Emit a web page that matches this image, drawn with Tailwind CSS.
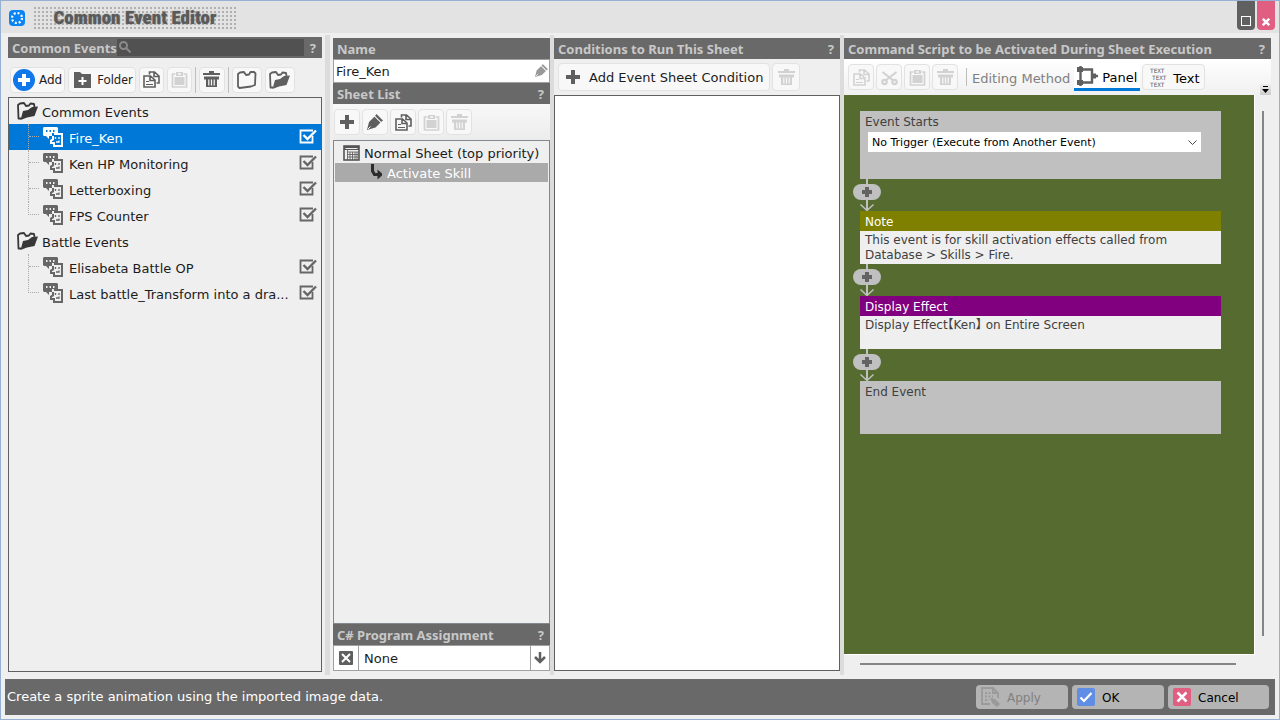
<!DOCTYPE html>
<html lang="en">
<head>
    <meta charset="UTF-8">
    <meta name="viewport" content="width=device-width, initial-scale=1.0">
    <title>Common Event Editor</title>
    <!-- Tailwind CSS via CDN -->
    <script src="https://cdn.jsdelivr.net/npm/@tailwindcss/browser@4"></script>
</head>
<body class="h-screen flex flex-col overflow-hidden border border-[#94b0d2] bg-[#efefef] font-['DejaVu_Sans','Noto_Sans_CJK_JP',sans-serif] text-[13px] leading-5 text-[#1c1c1c]">

<!-- Icon set -->
<svg class="hidden">
    <symbol id="i-plus" viewBox="0 0 14 14"><path fill="currentColor" d="M5 0h4v5h5v4H9v5H5V9H0V5h5z"/></symbol>
    <symbol id="i-copy" viewBox="0 0 17 17">
        <path fill="none" stroke="currentColor" stroke-width="1.600" d="M6.500 3.500V1h5L16 5v7h-2.500M11 1v4.500h4.500"/>
        <path fill="none" stroke="currentColor" stroke-width="1.600" d="M1 5h6.500L12 9v7H1zM7 5v4.500h4.500"/>
        <path stroke="currentColor" d="M3 10.500h3M3 13.500h7"/>
    </symbol>
    <symbol id="i-paste" viewBox="0 0 17 17">
        <path fill="none" stroke="currentColor" stroke-width="1.700" d="M4.500 3H1.500V16h14V3H12.500"/>
        <path fill="currentColor" fill-rule="evenodd" d="M5 1h7v4H5zM7 2.200v1.600h3V2.200zM3.500 6h10v8h-10z"/>
    </symbol>
    <symbol id="i-trash" viewBox="0 0 17 17">
        <path fill="currentColor" d="M6 0h5v2h6v2H0V2h6zM1 5.500h15v3h-2V16H3V8.500H1z"/>
        <path stroke="#f8f8f8" stroke-width="1.200" d="M5.800 8.500v6M8.500 8.500v6M11.200 8.500v6"/>
    </symbol>
    <symbol id="i-cut" viewBox="0 0 17 17">
        <g fill="none" stroke="currentColor" stroke-width="2.200"><path d="M1.500 3l11 8.500M15.500 3L4.500 11.500"/><circle cx="3.500" cy="13" r="2.200"/><circle cx="13.500" cy="13" r="2.200"/></g>
    </symbol>
    <symbol id="i-pen" viewBox="0 0 16 16">
        <path fill="currentColor" d="M9.500 0L16 6.500 14 8 8 2zM7.500 2.500L13.500 8.500 8.500 13.500 0 16 2 8z"/>
        <path stroke="#f8f8f8" d="M1 15l2.500-2.500M7.500 2l6.500 6.500"/>
    </symbol>
    <symbol id="i-folder" viewBox="0 0 20 18"><path fill="none" stroke="currentColor" stroke-width="1.800" stroke-linejoin="round" d="M2.500 17L1 15.500V3l2-1.500 4-.500 2 3 3-.500 1.500-2.500h3.500l1.500 1.500-.500 11.500-4 1.500z"/></symbol>
    <symbol id="i-open" viewBox="0 0 21 18">
        <path fill="none" stroke="currentColor" stroke-width="1.800" stroke-linejoin="round" d="M4 16.500H1.500L1 3l2-1.500L7 1l2 3 3-.500L13.500 1.500 17 2l.500 3"/>
        <path fill="currentColor" d="M6 9l5-1 4-3 6-.500L17.500 14 10 15.500 3.500 18z"/>
    </symbol>
    <symbol id="i-event" viewBox="0 0 20 20">
        <path fill="currentColor" fill-rule="evenodd" d="M1 0h13l1 1v5H9v3H6v3L3 9H1L0 8V1zM3 3v2h1.500V3zM6.500 3v2H8V3zM10 3v2h1.500V3z"/>
        <path fill="none" stroke="currentColor" stroke-width="2" d="M11 7h8v12h-8v-3H8v-2.500l2-1V9"/>
        <path fill="none" stroke="currentColor" stroke-width="1.300" d="M12.500 10v2M16 10v2M13 15h3v-1.500"/>
    </symbol>
    <symbol id="i-check" viewBox="0 0 18 16">
        <path fill="none" stroke="currentColor" stroke-width="1.800" d="M14 1.500H1.500v12h12V7"/>
        <path fill="none" stroke="currentColor" stroke-width="2.400" d="M4.500 6l4 4L17 1.500"/>
    </symbol>
    <symbol id="i-link" viewBox="0 0 28 32">
        <path stroke="#c0c0c0" stroke-width="2" d="M14 0v31"/>
        <path fill="none" stroke="#c0c0c0" stroke-width="1.500" d="M7.500 25.500l6.500 6 6.500-6"/>
        <rect y="5" width="28" height="16" rx="8" fill="#c0c0c0"/>
        <path fill="#636363" d="M12 8h4v3h3v4h-3v3h-4v-3H9v-4h3z"/>
    </symbol>
</svg>

<!-- Title bar -->
<header class="flex h-8 shrink-0 items-start justify-between bg-[#e3e3e3] pr-1 pl-2">
    <div class="flex items-center gap-2 pt-[5px]">
        <svg class="size-4" viewBox="0 0 16 16"><rect width="16" height="16" rx="4" fill="#0a84f4"/><circle cx="8" cy="8" r="5" fill="none" stroke="#fff" stroke-width="2.200" stroke-dasharray="2 1.920"/></svg>
        <h1 class="flex h-[23px] w-[204px] items-center justify-center bg-[radial-gradient(#b0b0b0_1px,transparent_1px)] bg-size-[4px_4px] font-['Roboto_Condensed',Roboto,sans-serif] text-[19px] font-black whitespace-nowrap text-[#5a5a5a] [text-shadow:0_0_2px_#999]">Common Event Editor</h1>
    </div>
    <div class="flex gap-0.5">
        <button aria-label="Maximize" class="flex h-[29px] w-[18px] items-end justify-center rounded-b bg-[#606060] pb-1"><span class="size-2.5 border border-white"></span></button>
        <button aria-label="Close" class="flex h-[29px] w-[18px] items-end justify-center rounded-b bg-[#e05e82] pb-1"><svg class="size-2 text-white" viewBox="0 0 10 10"><path stroke="currentColor" stroke-width="3" d="M1 1l8 8M9 1L1 9"/></svg></button>
    </div>
</header>

<main class="flex min-h-0 flex-1 pr-2 pl-[7px]">
    <!-- Event tree -->
    <section class="flex w-[314px] shrink-0 flex-col pt-1 pb-[7px]">
        <div class="flex h-[21px] items-center bg-[#696969] pr-1.5 pl-1 font-['Noto_Sans',sans-serif] font-bold text-[#c8c8c8]">
            <h2 class="whitespace-nowrap"><label for="search">Common Events</label></h2>
            <div class="relative flex-1">
                <input id="search" type="text" class="block h-[17px] w-full bg-[#515151] pl-5 text-xs outline-none">
                <svg class="absolute top-0.5 left-0.5 size-3 text-[#8a8a8a]" viewBox="0 0 12 12"><g fill="none" stroke="currentColor" stroke-width="2"><circle cx="4.500" cy="4.500" r="3.500"/><path d="M7 7l4.500 4.500"/></g></svg>
            </div>
            <button class="ml-1.5">?</button>
        </div>
        <div class="flex h-[39px] items-center gap-[3px] px-0.5 pt-1">
            <button class="flex h-[26px] items-center gap-1 rounded border border-[#e2e2e2] bg-[#f8f8f8] px-0.5 text-xs"><svg class="size-[22px]" viewBox="0 0 22 22"><circle cx="11" cy="11" r="11" fill="#1078e8"/><path fill="#fff" d="M9 5h4v4h4v4h-4v4H9v-4H5V9h4z"/></svg>Add</button>
            <button class="flex h-[26px] items-center gap-1.5 rounded border border-[#e2e2e2] bg-[#f8f8f8] px-0.5 pl-[5px] font-['Noto_Sans',sans-serif] text-xs"><svg class="h-4 w-[17px] text-[#5f5f5f]" viewBox="0 0 17 16"><path fill="currentColor" d="M0 0h6l2 2h9v14H0z"/><path stroke="#fff" stroke-width="2" d="M8.500 5v8M4.500 9h8"/></svg>Folder</button>
            <button aria-label="Copy" class="flex h-[26px] w-[25px] items-center justify-center rounded border border-[#e2e2e2] bg-[#f8f8f8] text-[#5f5f5f]"><svg class="size-[17px]"><use href="#i-copy"/></svg></button>
            <button aria-label="Paste" disabled class="flex h-[26px] w-[25px] items-center justify-center rounded border border-[#e2e2e2] bg-[#f8f8f8] text-[#d2d2d2]"><svg class="size-[17px]"><use href="#i-paste"/></svg></button>
            <span class="h-[26px] w-px bg-[#bdbdbd]"></span>
            <button aria-label="Delete" class="flex size-[26px] items-center justify-center rounded border border-[#e2e2e2] bg-[#f8f8f8] text-[#5f5f5f]"><svg class="size-[17px]"><use href="#i-trash"/></svg></button>
            <span class="h-[26px] w-px bg-[#bdbdbd]"></span>
            <button aria-label="Close folders" class="flex h-[26px] w-[30px] items-center justify-center rounded border border-[#e2e2e2] bg-[#f8f8f8] text-[#5f5f5f]"><svg class="h-[18px] w-5"><use href="#i-folder"/></svg></button>
            <button aria-label="Open folders" class="flex h-[26px] w-[30px] items-center justify-center rounded border border-[#e2e2e2] bg-[#f8f8f8] text-[#5f5f5f]"><svg class="h-[18px] w-[21px]"><use href="#i-open"/></svg></button>
        </div>
        <ul class="flex-1 border border-[#606060]">
            <li>
                <div class="flex h-[26px] items-center gap-1 pl-2"><svg class="h-[18px] w-[21px] text-[#383838]"><use href="#i-open"/></svg><span class="pt-[3px]">Common Events</span></div>
                <ul>
                    <li class="flex h-[26px] items-center bg-[#0078d7] pr-1 pl-[19px] text-white"><span class="h-full w-[11px] border-l border-dotted border-[#aaa]"><span class="block h-1/2 border-b border-dotted border-[#aaa]"></span></span><svg class="ml-1 size-5"><use href="#i-event"/></svg><span class="flex-1 pt-[3px] pl-1.5">Fire_Ken</span><svg class="h-4 w-[18px]"><use href="#i-check"/></svg></li>
                    <li class="flex h-[26px] items-center pr-1 pl-[19px]"><span class="h-full w-[11px] border-l border-dotted border-[#aaa]"><span class="block h-1/2 border-b border-dotted border-[#aaa]"></span></span><svg class="ml-1 size-5 text-[#666]"><use href="#i-event"/></svg><span class="flex-1 pt-[3px] pl-1.5">Ken HP Monitoring</span><svg class="h-4 w-[18px] text-[#666]"><use href="#i-check"/></svg></li>
                    <li class="flex h-[26px] items-center pr-1 pl-[19px]"><span class="h-full w-[11px] border-l border-dotted border-[#aaa]"><span class="block h-1/2 border-b border-dotted border-[#aaa]"></span></span><svg class="ml-1 size-5 text-[#666]"><use href="#i-event"/></svg><span class="flex-1 pt-[3px] pl-1.5">Letterboxing</span><svg class="h-4 w-[18px] text-[#666]"><use href="#i-check"/></svg></li>
                    <li class="flex h-[26px] items-center pr-1 pl-[19px]"><span class="h-full w-[11px]"><span class="block h-1/2 border-b border-l border-dotted border-[#aaa]"></span></span><svg class="ml-1 size-5 text-[#666]"><use href="#i-event"/></svg><span class="flex-1 pt-[3px] pl-1.5">FPS Counter</span><svg class="h-4 w-[18px] text-[#666]"><use href="#i-check"/></svg></li>
                </ul>
            </li>
            <li>
                <div class="flex h-[26px] items-center gap-1 pl-2"><svg class="h-[18px] w-[21px] text-[#383838]"><use href="#i-open"/></svg><span class="pt-[3px]">Battle Events</span></div>
                <ul>
                    <li class="flex h-[26px] items-center pr-1 pl-[19px]"><span class="h-full w-[11px] border-l border-dotted border-[#aaa]"><span class="block h-1/2 border-b border-dotted border-[#aaa]"></span></span><svg class="ml-1 size-5 text-[#666]"><use href="#i-event"/></svg><span class="flex-1 pt-[3px] pl-1.5">Elisabeta Battle OP</span><svg class="h-4 w-[18px] text-[#666]"><use href="#i-check"/></svg></li>
                    <li class="flex h-[26px] items-center pr-1 pl-[19px]"><span class="h-full w-[11px]"><span class="block h-1/2 border-b border-l border-dotted border-[#aaa]"></span></span><svg class="ml-1 size-5 text-[#666]"><use href="#i-event"/></svg><span class="flex-1 pt-[3px] pl-1.5 whitespace-nowrap">Last battle_Transform into a dra...</span><svg class="h-4 w-[18px] text-[#666]"><use href="#i-check"/></svg></li>
                </ul>
            </li>
        </ul>
    </section>
    <div class="mx-[3px] mt-0.5 mb-1 w-[5px] shrink-0 bg-[#dcdcdc]"></div>

    <!-- Sheets -->
    <section class="flex w-[217px] shrink-0 flex-col pt-[5px] pb-2">
        <h2 class="h-[21px] bg-[#696969] px-1 pt-px font-['Noto_Sans',sans-serif] font-bold text-[#c8c8c8]"><label for="name">Name</label></h2>
        <div class="relative">
            <input id="name" type="text" value="Fire_Ken" class="block h-6 w-full border border-[#a0a0a0] bg-white px-0.5 pt-px outline-none">
            <svg class="absolute top-[5px] right-0.5 size-[13px] text-[#999]"><use href="#i-pen"/></svg>
        </div>
        <div class="flex h-[21px] justify-between bg-[#696969] pt-px pr-1.5 pl-1 font-['Noto_Sans',sans-serif] font-bold text-[#c8c8c8]"><h2>Sheet List</h2><button>?</button></div>
        <div class="flex h-9 items-center gap-0.5 bg-linear-to-b from-[#f8f8f8] to-[#ececec] px-px">
            <button aria-label="Add" class="flex size-[26px] items-center justify-center rounded border border-[#e2e2e2] bg-[#f8f8f8] text-[#5f5f5f]"><svg class="size-3.5"><use href="#i-plus"/></svg></button>
            <button aria-label="Rename" class="flex size-[26px] items-center justify-center rounded border border-[#e2e2e2] bg-[#f8f8f8] text-[#5f5f5f]"><svg class="size-4"><use href="#i-pen"/></svg></button>
            <button aria-label="Copy" class="flex size-[26px] items-center justify-center rounded border border-[#e2e2e2] bg-[#f8f8f8] text-[#5f5f5f]"><svg class="size-[17px]"><use href="#i-copy"/></svg></button>
            <button aria-label="Paste" disabled class="flex size-[26px] items-center justify-center rounded border border-[#e2e2e2] bg-[#f8f8f8] text-[#d2d2d2]"><svg class="size-[17px]"><use href="#i-paste"/></svg></button>
            <button aria-label="Delete" disabled class="flex size-[26px] items-center justify-center rounded border border-[#e2e2e2] bg-[#f8f8f8] text-[#d2d2d2]"><svg class="size-[17px]"><use href="#i-trash"/></svg></button>
        </div>
        <ul class="flex-1 border border-[#828790] px-px pt-0.5">
            <li class="flex h-5 items-center gap-1 pl-2 whitespace-nowrap"><svg class="h-4 w-[17px] shrink-0 text-[#555]" viewBox="0 0 17 16"><rect x="1" y="1" width="15" height="14" fill="none" stroke="currentColor" stroke-width="1.600"/><path fill="currentColor" d="M1 1h15v4H1z"/><path stroke="#efefef" d="M2.500 3.500h12"/><path fill="none" stroke="currentColor" stroke-width=".8" d="M4.500 5v10M7 7v8M9.500 7v8M12 7v8M14 7v8M4.500 7h11M4.500 9.500h11M4.500 12h11"/></svg><span class="pt-0.5">Normal Sheet (top priority)</span></li>
            <li class="flex h-[19px] items-center gap-[5px] bg-[#aaa] pl-9 text-white"><svg class="h-[17px] w-[11px] text-[#2c2c2c]" viewBox="0 0 11 17"><path fill="none" stroke="currentColor" stroke-width="3" d="M1.500 0v7l2 3.500H8"/><path fill="currentColor" d="M6.500 5.500L12 10.500l-5.500 5z"/></svg><span class="pt-0.5">Activate Skill</span></li>
        </ul>
        <div class="flex h-[21px] justify-between bg-[#696969] pt-px pr-1.5 pl-1 font-['Noto_Sans',sans-serif] font-bold text-[#c8c8c8]"><h2><label for="program">C# Program Assignment</label></h2><button>?</button></div>
        <div class="flex h-[26px] border border-[#a0a0a0] bg-white">
            <button aria-label="Clear" class="flex w-[25px] items-center justify-center border-r border-[#a0a0a0]"><svg class="size-3.5" viewBox="0 0 14 14"><rect width="14" height="14" rx="1" fill="#5f5f5f"/><path stroke="#fff" stroke-width="2" d="M3 3l8 8M11 3l-8 8"/></svg></button>
            <input id="program" type="text" value="None" class="min-w-0 flex-1 px-[5px] pt-px outline-none">
            <button aria-label="Choose" class="flex w-[19px] items-center justify-center border-l border-[#a0a0a0] text-[#5f5f5f]"><svg class="size-3" viewBox="0 0 12 12"><path fill="none" stroke="currentColor" stroke-width="2.500" d="M6 0v10M1 5l5 5 5-5"/></svg></button>
        </div>
    </section>
    <div class="mt-0.5 mb-1 w-1 shrink-0 bg-[#dcdcdc]"></div>

    <!-- Conditions -->
    <section class="flex w-[286px] shrink-0 flex-col pt-[5px] pb-2">
        <div class="flex h-[21px] justify-between bg-[#696969] pt-px pr-1.5 pl-1 font-['Noto_Sans',sans-serif] font-bold text-[#c8c8c8]"><h2>Conditions to Run This Sheet</h2><button>?</button></div>
        <div class="flex h-9 items-center gap-0.5 px-1">
            <button class="flex h-7 items-center gap-[9px] rounded border border-[#e2e2e2] bg-[#f8f8f8] pr-1.5 pl-[7px] whitespace-nowrap"><svg class="size-3.5 text-[#5f5f5f]"><use href="#i-plus"/></svg><span class="pt-0.5">Add Event Sheet Condition</span></button>
            <button aria-label="Delete" disabled class="flex size-7 items-center justify-center rounded border border-[#e2e2e2] bg-[#f8f8f8] text-[#d2d2d2]"><svg class="size-[17px]"><use href="#i-trash"/></svg></button>
        </div>
        <div class="flex-1 border border-[#606060] bg-white"></div>
    </section>
    <div class="mt-0.5 mb-1 w-1 shrink-0 bg-[#dcdcdc]"></div>

    <!-- Command script -->
    <section class="flex min-w-0 flex-1 flex-col pt-[5px]">
        <div class="flex h-[21px] shrink-0 justify-between bg-[#696969] pt-px pr-1.5 pl-1 font-['Noto_Sans',sans-serif] font-bold text-[#c8c8c8]"><h2>Command Script to be Activated During Sheet Execution</h2><button>?</button></div>
        <div class="flex h-9 shrink-0 items-center gap-0.5 rounded-b bg-linear-to-b from-white to-[#f0f0f0] pl-1">
            <button aria-label="Copy" disabled class="flex size-[26px] items-center justify-center rounded border border-[#e2e2e2] bg-[#f8f8f8] text-[#d2d2d2]"><svg class="size-[17px]"><use href="#i-copy"/></svg></button>
            <button aria-label="Cut" disabled class="flex size-[26px] items-center justify-center rounded border border-[#e2e2e2] bg-[#f8f8f8] text-[#d2d2d2]"><svg class="size-[17px]"><use href="#i-cut"/></svg></button>
            <button aria-label="Paste" disabled class="flex size-[26px] items-center justify-center rounded border border-[#e2e2e2] bg-[#f8f8f8] text-[#d2d2d2]"><svg class="size-[17px]"><use href="#i-paste"/></svg></button>
            <button aria-label="Delete" disabled class="flex size-[26px] items-center justify-center rounded border border-[#e2e2e2] bg-[#f8f8f8] text-[#d2d2d2]"><svg class="size-[17px]"><use href="#i-trash"/></svg></button>
            <span class="mr-[3px] ml-1.5 h-[18px] w-px bg-[#bdbdbd]"></span>
            <span class="pt-[3px] whitespace-nowrap text-[#808080]">Editing Method</span>
            <button class="ml-0.5 flex h-7 items-center gap-1 border-b-[3px] border-[#0078d7] bg-white px-[3px] text-black"><svg class="h-5 w-[21px] text-[#5f5f5f]" viewBox="0 0 21 20"><path fill="none" stroke="currentColor" stroke-width="2.400" d="M3.500 0v20M2 3.500h13v13H2M15 10h6"/><path fill="currentColor" d="M0 1h6v5H0zM0 14h6v5H0zM16 7.500h3v5h-3z"/></svg><span class="pt-1">Panel</span></button>
            <button class="flex h-[26px] items-center gap-1.5 rounded border border-[#e2e2e2] bg-[#f8f8f8] px-1 text-black"><span aria-hidden="true" class="flex w-5 flex-col font-['DejaVu_Sans_Mono',monospace] text-[6px] leading-[7px] text-[#555]"><span>TEXT</span><span class="pl-1">TEXT</span><span>TEXT</span></span><span class="pt-[3px]">Text</span></button>
            <button aria-label="More tools" class="mt-auto ml-auto flex h-[11px] w-[11px] items-center justify-center bg-linear-to-b from-[#eee] to-[#ccc] text-black"><svg class="h-[7px] w-[7px]" viewBox="0 0 7 7"><path fill="currentColor" d="M1 0h5v1H1zM0 3h7L3.500 7z"/></svg></button>
        </div>
        <div class="flex min-h-0 flex-1">
            <div class="min-w-0 flex-1 overflow-hidden border-r border-b border-white bg-[#556b2f] px-4 pt-4 text-xs leading-[15px] text-[#404040]">
                <div class="h-[68px] max-w-[361px] bg-[#c0c0c0] px-2 pt-1">
                    <label for="trigger" class="-ml-[3px] block h-[17px]">Event Starts</label>
                    <div class="relative mr-3">
                        <select id="trigger" class="block h-5 w-full appearance-none bg-white px-1 pt-px text-[11px] text-black outline-none"><option>No Trigger (Execute from Another Event)</option></select>
                        <svg class="absolute top-2 right-1 h-[5px] w-[9px]" viewBox="0 0 9 5"><path fill="none" stroke="#444" d="M.5.500l4 4 4-4"/></svg>
                    </div>
                </div>
                <button aria-label="Insert command" class="-ml-[7px] block"><svg class="block h-8 w-7"><use href="#i-link"/></svg></button>
                <div class="max-w-[361px]">
                    <h3 class="h-5 bg-[#808000] px-[5px] pt-1 text-white">Note</h3>
                    <p class="h-[33px] bg-[#efefef] px-[5px] pt-0.5">This event is for skill activation effects called from<br>Database &gt; Skills &gt; Fire.</p>
                </div>
                <button aria-label="Insert command" class="-ml-[7px] block"><svg class="block h-8 w-7"><use href="#i-link"/></svg></button>
                <div class="max-w-[361px]">
                    <h3 class="h-5 bg-[#800080] px-[5px] pt-1 text-white">Display Effect</h3>
                    <p class="h-[33px] bg-[#efefef] px-[5px] pt-0.5 [font-feature-settings:'halt']">Display Effect【Ken】 on Entire Screen</p>
                </div>
                <button aria-label="Insert command" class="-ml-[7px] block"><svg class="block h-8 w-7"><use href="#i-link"/></svg></button>
                <div class="h-[53px] max-w-[361px] bg-[#c0c0c0] px-[5px] pt-1">End Event</div>
            </div>
            <div class="flex w-4 justify-center pt-4 pb-[19px]"><span class="w-0.5 bg-[#858585]"></span></div>
        </div>
        <div class="h-6 pt-2 pr-[35px] pl-4"><div class="h-0.5 bg-[#858585]"></div></div>
    </section>
</main>

<!-- Status bar -->
<footer class="mx-1 mb-1 flex h-9 shrink-0 items-center gap-1 bg-[#696969] pr-1.5 pl-0.5">
    <p class="flex-1 text-white">Create a sprite animation using the imported image data.</p>
    <button disabled class="flex h-6 w-[92px] items-center gap-[7px] rounded bg-[#b4b4b4] pl-[5px] text-xs text-[#808080]"><svg class="h-5 w-[19px]" viewBox="0 0 19 20"><path fill="none" stroke="#9a9a9a" stroke-width="1.800" d="M9 17H1V1h11l5 5v5M12 1v5h5"/><path stroke="#9a9a9a" stroke-width="2" stroke-dasharray="2 1.500" d="M4 6h6M4 9.500h8M4 13h4"/><path fill="#9a9a9a" d="M9 11l5 1 5 5-3 3-5-4z"/></svg><span class="pt-0.5">Apply</span></button>
    <button class="flex h-6 w-[92px] items-center gap-[7px] rounded bg-[#b4b4b4] pl-[5px] text-xs text-black"><svg class="size-[18px]" viewBox="0 0 18 18"><rect width="18" height="18" rx="2" fill="#5f8ee4"/><path fill="none" stroke="#fff" stroke-width="2.200" d="M3.500 9.500l3.500 3.500 7.500-8"/></svg><span class="pt-0.5">OK</span></button>
    <button class="flex h-6 w-[101px] items-center gap-[7px] rounded bg-[#b4b4b4] pl-[5px] text-xs text-black"><svg class="size-[18px]" viewBox="0 0 18 18"><rect width="18" height="18" rx="2" fill="#e05e82"/><path stroke="#fff" stroke-width="2.500" d="M4.500 4.500l9 9M13.500 4.500l-9 9"/></svg><span class="pt-0.5">Cancel</span></button>
</footer>
</body>
</html>
